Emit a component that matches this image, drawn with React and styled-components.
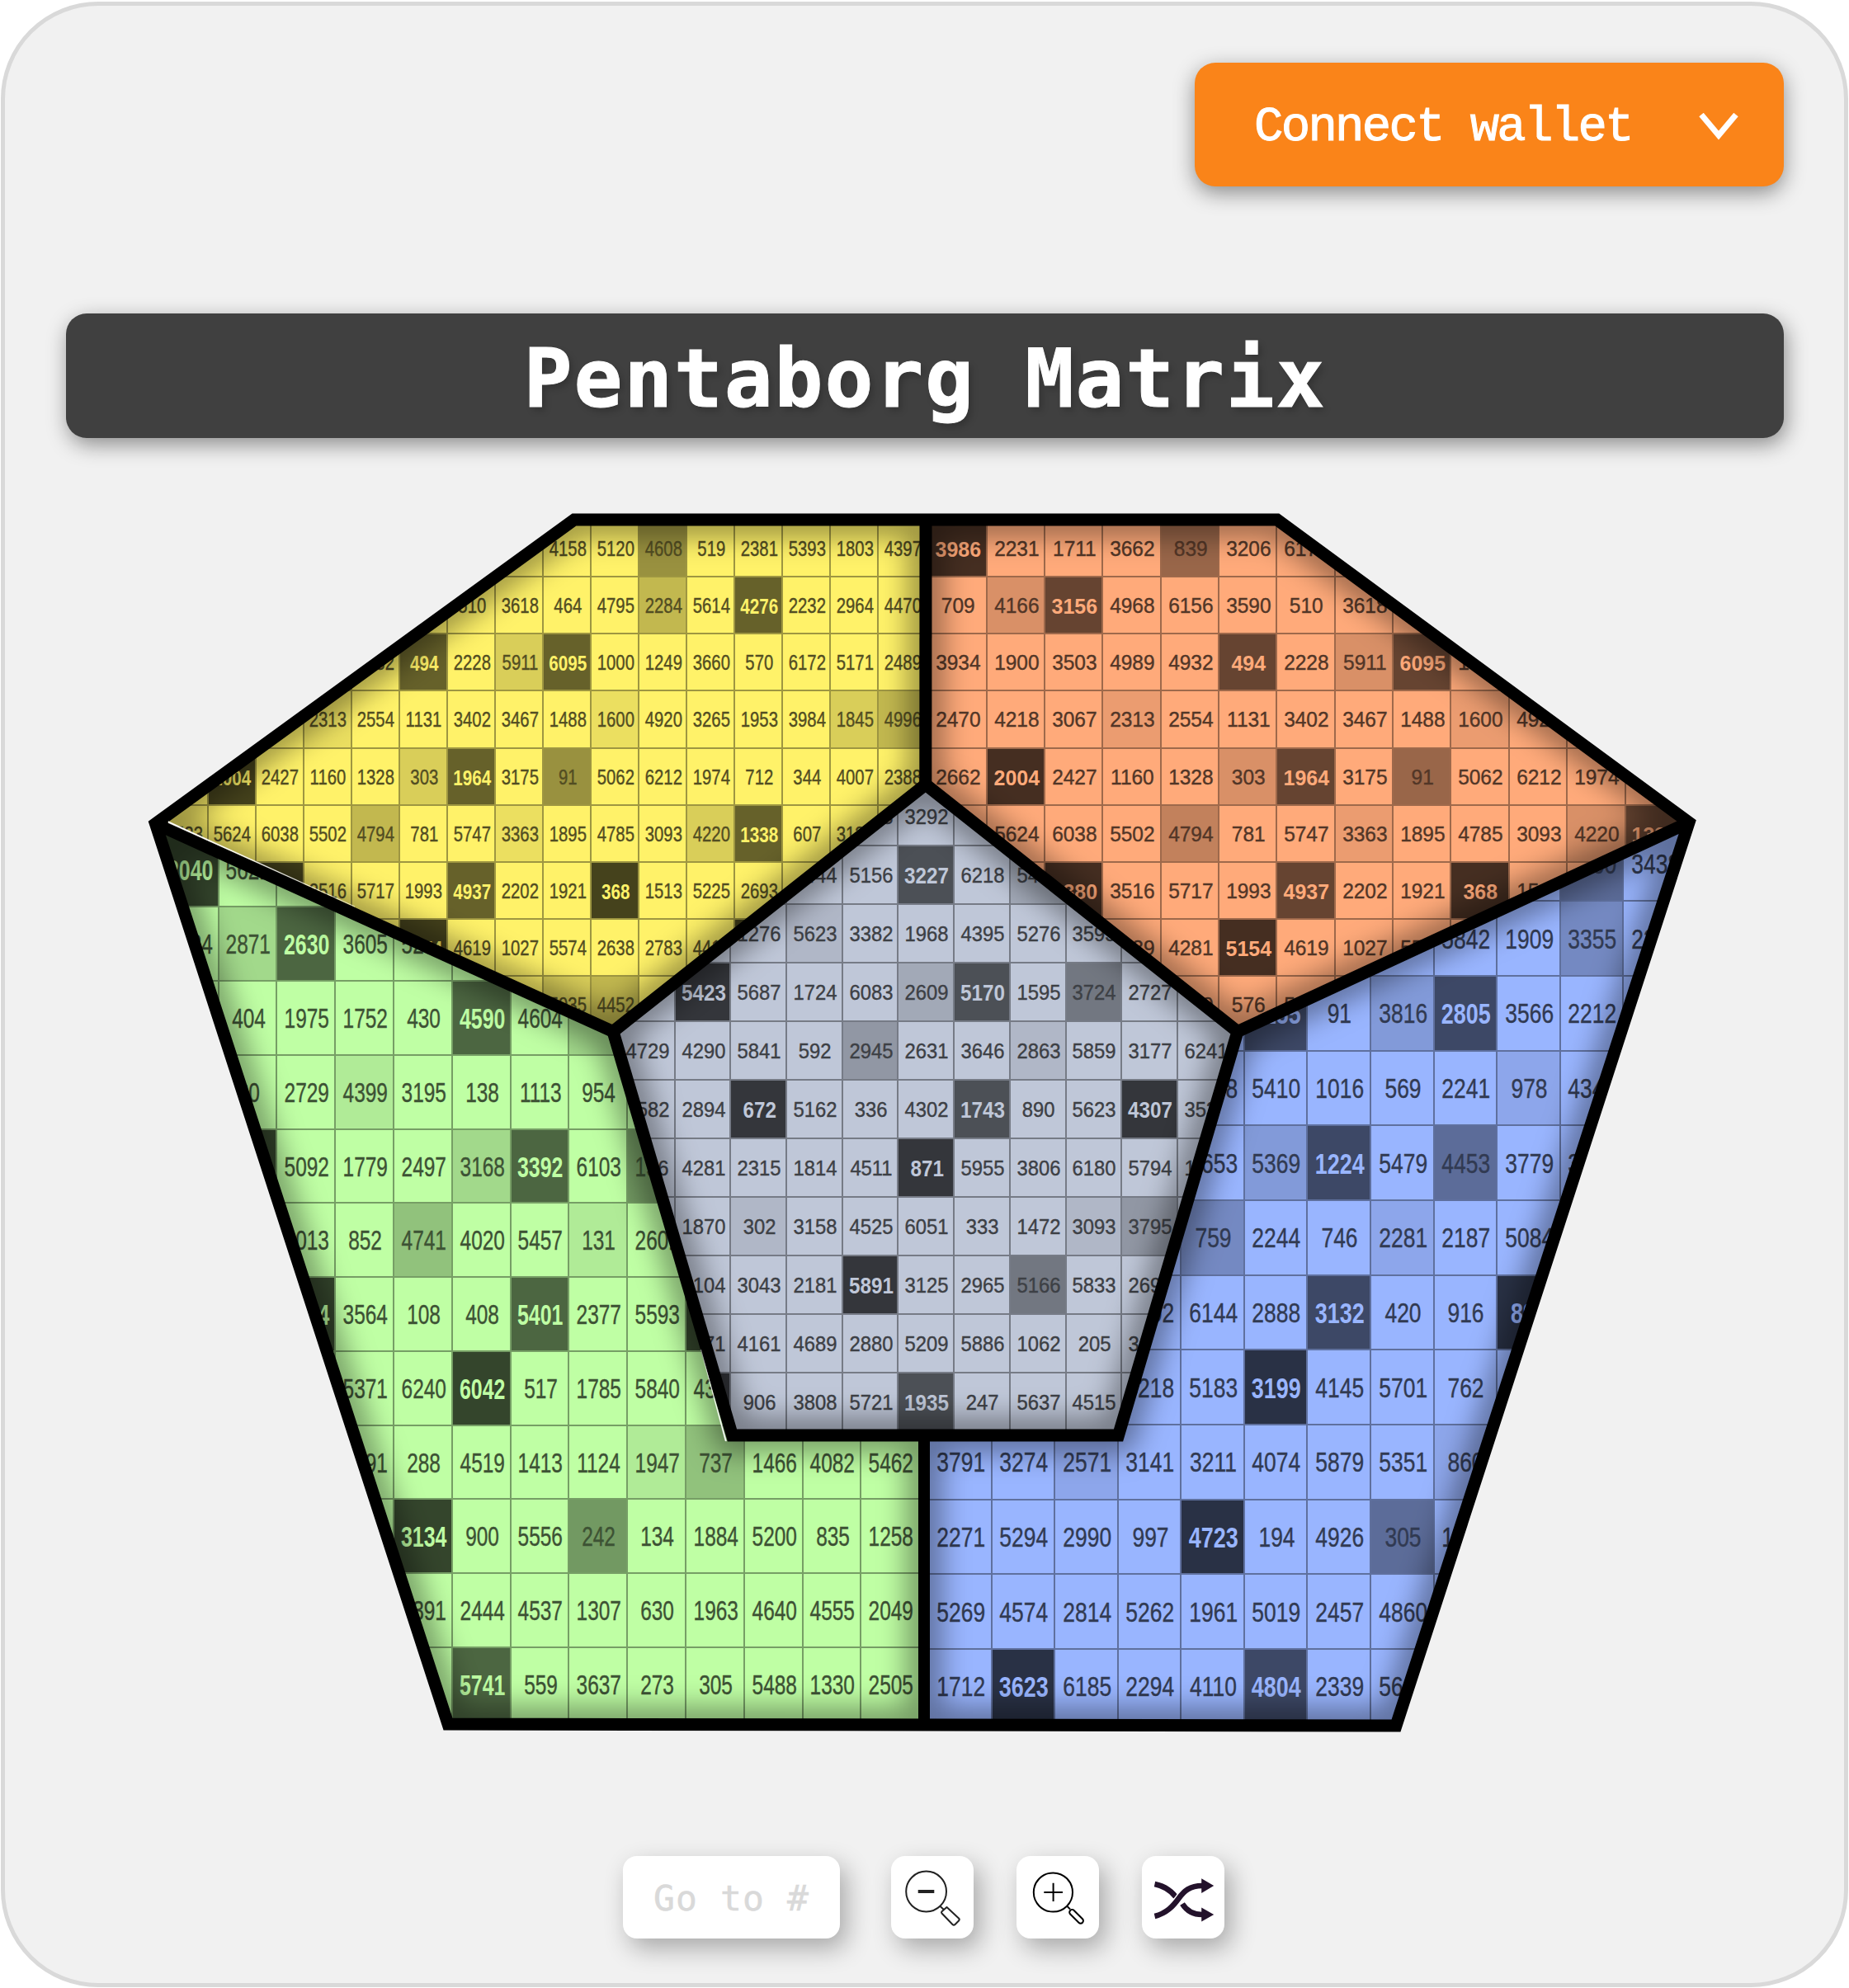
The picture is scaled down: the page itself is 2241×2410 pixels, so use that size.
import React from "react";
import styled, { createGlobalStyle } from "styled-components";

const GlobalStyle = createGlobalStyle`
  * { box-sizing: border-box; }
  html, body { margin: 0; padding: 0; background: #ffffff; }
`;

const mono = `Consolas, "Liberation Mono", monospace`;
const displayMono = `Consolas, "DejaVu Sans Mono", monospace`;

const Card = styled.main`
  display: flex;
  flex-direction: column;
  width: 2239px;
  height: 2407px;
  margin: 2px 1px 1px;
  padding: 69px 73px 0 74px;
  border: 5px solid #d9d9d9;
  border-radius: 118px;
  background: #f1f1f1;
  font-family: ${mono};
`;

const Header = styled.header`
  display: flex;
  justify-content: flex-end;
`;

const ConnectButton = styled.button`
  display: flex;
  align-items: center;
  justify-content: space-between;
  width: 714px;
  height: 150px;
  padding: 6px 55px 0 72px;
  border: 0;
  border-radius: 25px;
  background: #fa8419;
  box-shadow: 0 8px 26px rgba(0, 0, 0, 0.42);
  color: #ffffff;
  font-family: ${mono};
  font-size: 59px;
  letter-spacing: -2.7px;
  -webkit-text-stroke: 1px #ffffff;
  white-space: nowrap;
`;

const Title = styled.h1`
  display: flex;
  align-items: center;
  justify-content: center;
  height: 151px;
  margin: 154px 0 0;
  padding-top: 6px;
  border-radius: 25px;
  background: #404040;
  box-shadow: 3px 8px 26px rgba(0, 0, 0, 0.42);
  color: #ffffff;
  font-family: ${displayMono};
  font-size: 98px;
  font-weight: 700;
  letter-spacing: 1.8px;
  -webkit-text-stroke: 1px #ffffff;
  text-shadow: 4px 5px 8px rgba(0, 0, 0, 0.2);
  white-space: nowrap;
`;

const Board = styled.section`
  position: relative;
  width: 1900px;
  height: 1500px;
  margin: 79px 0 0 90px;
`;

const Facet = styled.div`
  position: absolute;
  inset: 0;
  overflow: hidden;
  background: ${(p) => p.$color};
  color: ${(p) => p.$color};
  clip-path: polygon(${(p) => p.$shape});
`;

const Matrix = styled.div`
  position: absolute;
  left: ${(p) => p.$x}px;
  top: ${(p) => p.$y}px;
  display: grid;
  grid-template-columns: repeat(${(p) => p.$cols}, ${(p) => p.$w}px);
  grid-auto-rows: ${(p) => p.$h}px;
  font-family: "Liberation Sans", Arial, sans-serif;
  font-size: ${(p) => p.$size}px;
`;

const shades = { a: 0.08, b: 0.15, c: 0.24, d: 0.4, e: 0.6, f: 0.73 };

const Cell = styled.div`
  display: flex;
  align-items: center;
  justify-content: center;
  border: solid rgba(0, 0, 0, 0.38);
  border-width: 0 2px 2px 0;
  background: rgba(0, 0, 0, ${(p) => shades[p.$shade] || 0});
  background-clip: padding-box;
`;

const Num = styled.span`
  color: ${(p) => (p.$bright ? "inherit" : "color-mix(in srgb, currentColor 32%, #000)")};
  font-weight: ${(p) => (p.$bright ? 700 : 400)};
  -webkit-text-stroke: ${(p) => (p.$bright ? "0" : "0.4px currentColor")};
  transform: translate(1px, 1.4px)
    scale(${(p) => p.$stretch * (p.$bright ? 1.02 : 1)}, ${(p) => (p.$bright ? 1.04 : 1)});
`;

const Edges = styled.svg`
  position: absolute;
  inset: 0;
  width: 100%;
  height: 100%;
`;

const Toolbar = styled.nav`
  display: flex;
  align-items: center;
  gap: 52px;
  margin: 140px 0 0 675px;
`;

const GoTo = styled.label`
  display: flex;
  align-items: center;
  width: 263px;
  height: 100px;
  margin-right: 10px;
  padding: 2px 0 0 37px;
  border-radius: 17px;
  background: #ffffff;
  box-shadow: 8px 12px 30px rgba(0, 0, 0, 0.3);
  color: #d9d9d9;
  font-family: ${displayMono};
  font-size: 43px;
  letter-spacing: 1.1px;
  -webkit-text-stroke: 0.5px #d9d9d9;
  white-space: pre;
`;

const ToolButton = styled.button`
  width: 100px;
  height: 100px;
  padding: 0;
  border: 0;
  border-radius: 17px;
  background: #ffffff;
  box-shadow: 8px 12px 30px rgba(0, 0, 0, 0.3);
`;

const Glyph = styled.svg`
  display: block;
  width: 100px;
  height: 100px;
  fill: none;
`;

const ORIGIN = [170, 610];

const V = {
  left: [188.5, 998.5],
  topLeft: [696, 630],
  top: [1122, 630],
  topRight: [1547.8, 630],
  right: [2047, 997],
  bottomRight: [1692, 2092],
  bottom: [1120, 2091],
  bottomLeft: [543, 2090],
  apex: [1121.8, 951],
  innerLeft: [743, 1250.5],
  innerRight: [1500, 1250.5],
  innerBR: [1355.5, 1740],
  innerBL: [887.5, 1740],
  innerB: [1120, 1740],
};

const upper = [
  "3986f 2231 1711 3662 839d 3206 6171 . 4158 5120 4608d 519 2381 5393 1803 4397",
  "709 4166b 3156e 4968 6156 3590 510 3618 464 4795 2284c 5614 4276e 2232 2964 4470",
  "3934 1900 3503 4989 4932 494e 2228 5911b 6095e 1000 1249 3660 570 6172 5171 2489",
  "2470 4218 3067 2313a 2554 1131 3402 3467 1488 1600a 4920 3265 1953 3984 1845b 4996c",
  "2662 2004f 2427 1160 1328 303b 1964e 3175 91d 5062 6212 1974 712 344 4007 2388",
  "1523 5624 6038 5502 4794c 781 5747 3363a 1895 4785 3093 4220b 1338e 607 3135 .",
  ". . 4380f 3516 5717 1993 4937e 2202 1921 368f 1513 5225 2693 . . .",
  ". . . 2289 4281 5154f 4619 1027 5574 2638 2783 4415 .f . . .",
  ". . . . 2750 576 5120 . 5935b 4452c . . . . . .",
];

const facets = [
  {
    color: "#fff269",
    shape: ["left", "topLeft", "top", "apex", "innerLeft"],
    x: 193.6, y: 630, w: 58.05, h: 69.15, size: 25.5, stretch: 0.795,
    rows: upper,
  },
  {
    color: "#ffaa7a",
    shape: ["top", "topRight", "right", "innerRight", "apex"],
    x: 1125.4, y: 630, w: 70.35, h: 69.15, size: 25.5, stretch: 0.96,
    rows: upper,
  },
  {
    color: "#bfffa4",
    shape: ["left", "innerLeft", "innerBL", "innerB", "bottom", "bottomLeft"],
    x: 193.9, y: 1009.6, w: 70.8, h: 89.77, size: 33, stretch: 0.74,
    rows: [
      "2040f 5621 . . . . . . . . . . .",
      "5824 2871b 2630e 3605 5271 . . . . . . . .",
      ". 404 1975 1752 430 4590e 4604 .b . . . . .",
      ". 80 2729 4399a 3195 138 1113 954 . . . . .",
      ". .f 5092 1779 2497 3168b 3392e 6103 1526d . . . .",
      ". . 2013 852 4741c 4020 5457 131a 2601 . . . .",
      ". . 3724f 3564 108 408 5401e 2377 5593 .f . . .",
      ". . . 5371 6240 6042f 517 1785 5840 4317 . . .",
      ". . . 5191 288 4519 1413 1124 1947a 737c 1466 4082 5462",
      ". . . . 3134f 900 5556 242d 134 1884 5200 835 1258",
      ". . . . 3391 2444 4537 1307 630 1963 4640 4555 2049",
      ". . . . . 5741e 559 3637 273 305 5488 1330 2505",
    ],
  },
  {
    color: "#99b5ff",
    shape: ["right", "bottomRight", "bottom", "innerB", "innerBR", "innerRight"],
    x: 1125.2, y: 1001.5, w: 76.55, h: 90.68, size: 33, stretch: 0.8,
    rows: [
      ". . . . . . . . . . 5260d 3438",
      ". . . . . . . . 5842 1909 3355c 2293",
      ". . . . . 2135e 91 3816b 2805e 3566 2212 .",
      ". . . . 4538 5410 1016 569 2241 978a 4342 .",
      ". . . . 2653 5369b 1224e 5479 4453d 3779 3512 .",
      ". . . . 759c 2244 746 2281a 2187 5084 . .",
      ". . . 5302 6144 2888 3132e 420 916 891f . .",
      ". . . 4218 5183 3199f 4145 5701 762 . . .",
      "3791 3274 2571a 3141 3211 4074 5879 5351 860a . . .",
      "2271 5294 2990 997 4723f 194 4926 305d 1420 . . .",
      "5269 4574 2814 5262 1961 5019 2457 4860 . . . .",
      "1712 3623f 6185 2294 4110 4804e 2339 5641 . . . .",
    ],
  },
  {
    color: "#bfc7d8",
    shape: ["apex", "innerRight", "innerBR", "innerBL", "innerLeft"],
    x: 750, y: 953.8, w: 67.7, h: 71, size: 26, stretch: 0.915,
    rows: [
      ". . . . 4123 3292 . . . . .",
      ". . . 2444 5156 3227e 6218 5443b . . .",
      ". . 1276 5623a 3382 1968 4395 5276 3595 . .",
      ". 5423f 5687 1724 6083 2609b 5170e 1595 3724d 2727 .",
      "4729 4290 5841 592 2945c 2631 3646 2863a 5859 3177 6241",
      "1582 2894 672f 5162 336 4302 1743e 890 5623 4307f 3531",
      "1106 4281 2315 1814 4511 871f 5955 3806 6180 5794 1253",
      ". 1870 302a 3158 4525 6051 333 1472 3093a 3795c .",
      ". 2104 3043 2181 5891f 3125 2965 5166d 5833 2695 .",
      ". 3171 4161 4689 2880 5209 5886 1062 205 3148 .",
      ". .f 906 3808 5721 1935e 247 5637 4515 . .",
    ],
  },
];

const parse = (rows) =>
  rows.flatMap((row, r) =>
    row.split(" ").map((t, c) => {
      const m = /^(\d*)\.?([a-f]?)$/.exec(t);
      return { text: m[1], shade: m[2], r, c };
    })
  );

const pts = (names) => names.map((n) => V[n].join(",")).join(" ");

const clip = (names) =>
  names.map((n) => `${V[n][0] - ORIGIN[0]}px ${V[n][1] - ORIGIN[1]}px`).join(", ");

const inside = (x, y, poly) => {
  let hit = false;
  for (let i = 0, j = poly.length - 1; i < poly.length; j = i++) {
    const [xi, yi] = poly[i];
    const [xj, yj] = poly[j];
    if (yi > y !== yj > y && x < ((xj - xi) * (y - yi)) / (yj - yi) + xi) hit = !hit;
  }
  return hit;
};

// A number is only drawn when some part of it falls within the facet.
const isVisible = (facet, cell) => {
  const poly = facet.shape.map((n) => V[n]);
  const cx = facet.x + (cell.c + 0.5) * facet.w;
  const cy = facet.y + (cell.r + 0.5) * facet.h;
  return [-0.38, -0.2, 0, 0.2, 0.38].some((dx) =>
    [-0.14, 0, 0.14].some((dy) => inside(cx + dx * facet.w, cy + dy * facet.h, poly))
  );
};

function MatrixFacet({ facet }) {
  const cells = parse(facet.rows);
  return (
    <Facet $color={facet.color} $shape={clip(facet.shape)}>
      <Matrix
        $x={facet.x + 1 - ORIGIN[0]}
        $y={facet.y + 1 - ORIGIN[1]}
        $cols={facet.rows[0].split(" ").length}
        $w={facet.w}
        $h={facet.h}
        $size={facet.size}
      >
        {cells.map((c, i) => (
          <Cell key={i} $shade={c.shade}>
            {c.text && isVisible(facet, c) && (
              <Num $bright={c.shade === "e" || c.shade === "f"} $stretch={facet.stretch}>
                {c.text}
              </Num>
            )}
          </Cell>
        ))}
      </Matrix>
    </Facet>
  );
}

function BoardEdges() {
  return (
    <Edges viewBox="170 610 1900 1500" fill="none">
      <defs>
        <filter id="soft" filterUnits="userSpaceOnUse" x="100" y="540" width="2040" height="1640">
          <feGaussianBlur stdDeviation="17" />
        </filter>
        {facets.map((f, i) => (
          <clipPath id={`facet${i}`} key={i}>
            <polygon points={pts(f.shape)} />
          </clipPath>
        ))}
      </defs>
      {facets.map((f, i) => (
        <g clipPath={`url(#facet${i})`} key={i}>
          <polygon
            points={pts(f.shape)}
            stroke="#000"
            strokeWidth="42"
            strokeOpacity="0.4"
            filter="url(#soft)"
          />
        </g>
      ))}
      <g stroke="#000" strokeWidth="15" strokeMiterlimit="10">
        <polygon points={pts(["left", "topLeft", "topRight", "right", "bottomRight", "bottomLeft"])} />
        <polyline points={pts(["top", "apex"])} />
        <polyline points={pts(["left", "innerLeft"])} />
        <polyline points={pts(["right", "innerRight"])} />
        <polyline points={pts(["innerB", "bottom"])} strokeWidth="14" />
        <polygon points={pts(["apex", "innerRight", "innerBR", "innerBL", "innerLeft"])} />
      </g>
      <path d="M204 995.6 L430 1099 L204 997.6Z" fill="#fff" stroke="#fff" strokeWidth="0.4" />
      <path d="M849.5 1636 L880.6 1747 L879 1747Z" fill="#fff" stroke="#fff" strokeWidth="0.3" />
    </Edges>
  );
}

export default function App() {
  return (
    <>
      <GlobalStyle />
      <Card>
        <Header>
          <ConnectButton>
            Connect wallet
            <svg width="48" height="34" viewBox="0 0 48 34" fill="none" stroke="#fff" strokeWidth="7">
              <path d="M3 2 L24 27 L45 2" />
            </svg>
          </ConnectButton>
        </Header>
        <Title>Pentaborg Matrix</Title>
        <Board>
          {facets.map((f, i) => (
            <MatrixFacet facet={f} key={i} />
          ))}
          <BoardEdges />
        </Board>
        <Toolbar>
          <GoTo>Go to #</GoTo>
          <ToolButton aria-label="Zoom out">
            <Glyph viewBox="0 0 100 100" stroke="#222" strokeWidth="2">
              <circle cx="42.6" cy="43" r="24.4" />
              <path d="M32.7 43 H52.3" strokeWidth="4" />
              <path d="M59.5 61 L64 65" />
              <path d="M67.5 62 L82 75.5 Q83.5 77 82 78.5 L77.5 83 Q76 84.5 74.5 83 L61.5 69.5 Q60.5 68.3 61.5 67.3Z" strokeLinejoin="round" />
            </Glyph>
          </ToolButton>
          <ToolButton aria-label="Zoom in">
            <Glyph viewBox="0 0 100 100" stroke="#000" strokeWidth="2">
              <circle cx="44.4" cy="44" r="23.6" />
              <path d="M33.3 44 H56 M44.6 32.7 V55" />
              <path d="M61.5 61 L65 64.5" />
              <rect x="63.5" y="67.5" width="21" height="6.4" rx="3.2" transform="rotate(45 72 72.5) translate(-1 2)" />
            </Glyph>
          </ToolButton>
          <ToolButton aria-label="Shuffle">
            <Glyph viewBox="0 0 100 100" stroke="#23122b" strokeWidth="6.6">
              <path d="M15.5 34 C25 36 35 41.5 41 49.5" />
              <path d="M49 58 C54 66 62 71 73 71" />
              <path d="M15.5 73 C30 69.5 38 60.5 44.5 51.5 S58 36 73 36" stroke="#fff" strokeWidth="9.5" />
              <path d="M15.5 73 C30 69.5 38 60.5 44.5 51.5 S58 36 73 36" />
              <path d="M72.2 27.3 L87.2 36 L72.2 45Z M72.2 62.5 L87.2 71 L72.2 79.5Z" fill="#23122b" stroke="none" />
            </Glyph>
          </ToolButton>
        </Toolbar>
      </Card>
    </>
  );
}
